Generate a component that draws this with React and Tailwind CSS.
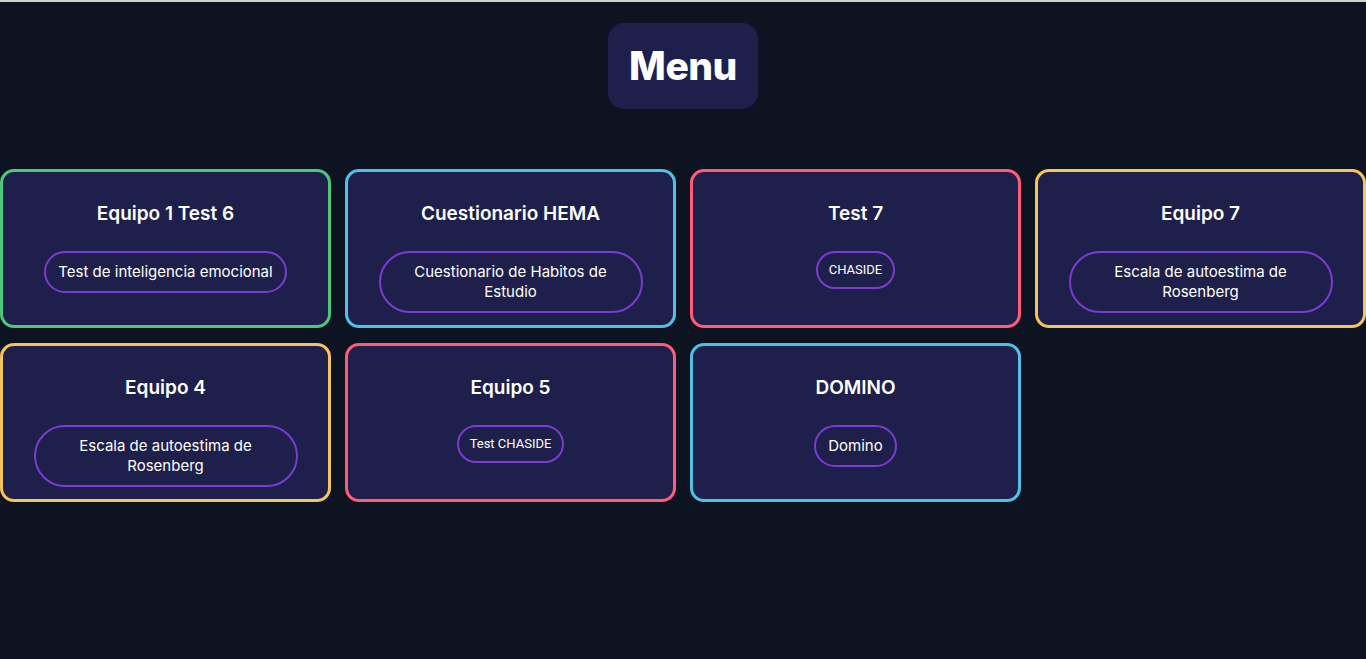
const cards = [
  { title: "Equipo 1 Test 6", label: "Test de inteligencia emocional", border: "border-[#4cc97c]" },
  { title: "Cuestionario HEMA", label: "Cuestionario de Habitos de Estudio", border: "border-[#52bfe4]" },
  { title: "Test 7", label: "CHASIDE", border: "border-[#ff5c79]", plain: true },
  { title: "Equipo 7", label: "Escala de autoestima de Rosenberg", border: "border-[#f3c65c]" },
  { title: "Equipo 4", label: "Escala de autoestima de Rosenberg", border: "border-[#f3c65c]" },
  { title: "Equipo 5", label: "Test CHASIDE", border: "border-[#ff5c79]", plain: true },
  { title: "DOMINO", label: "Domino", border: "border-[#52bfe4]" },
];

const Card = ({ title, label, border, plain }) => (
  <div
    className={`flex flex-col items-center rounded-[14px] border-[3px] ${border} bg-[#1e1f4b] pt-[29px] pb-[12px]`}
  >
    <h2 className="text-[19px] leading-[26px] font-semibold text-white mb-[24px]">
      {title}
    </h2>
    {plain ? (
      <button className="max-w-[264px] rounded-full border-2 border-[#7a3bd1] px-[11px] py-[9px] text-[13px] leading-[16px] text-white font-['Roboto',sans-serif]">
        {label}
      </button>
    ) : (
      <button className="max-w-[264px] rounded-full border-2 border-[#7a3bd1] px-[12px] py-[9px] text-[15px] leading-[20px] text-white">
        {label}
      </button>
    )}
  </div>
);

export default function App() {
  return (
    <div className="min-h-screen bg-[#0e1322] border-t-[2px] border-[#cfcfcf] font-['Inter','Noto_Sans',sans-serif]">
      <div className="flex justify-center pt-[21px]">
        <div className="rounded-[16px] bg-[#1e1f4b] w-[150px] h-[86px] flex items-center justify-center">
          <h1 className="text-[39px] font-extrabold text-white tracking-[-0.5px]">Menu</h1>
        </div>
      </div>
      <div className="grid grid-cols-4 gap-x-[14px] gap-y-[15px] mt-[60px]">
        {cards.map((c, i) => (
          <Card key={i} {...c} />
        ))}
      </div>
    </div>
  );
}
